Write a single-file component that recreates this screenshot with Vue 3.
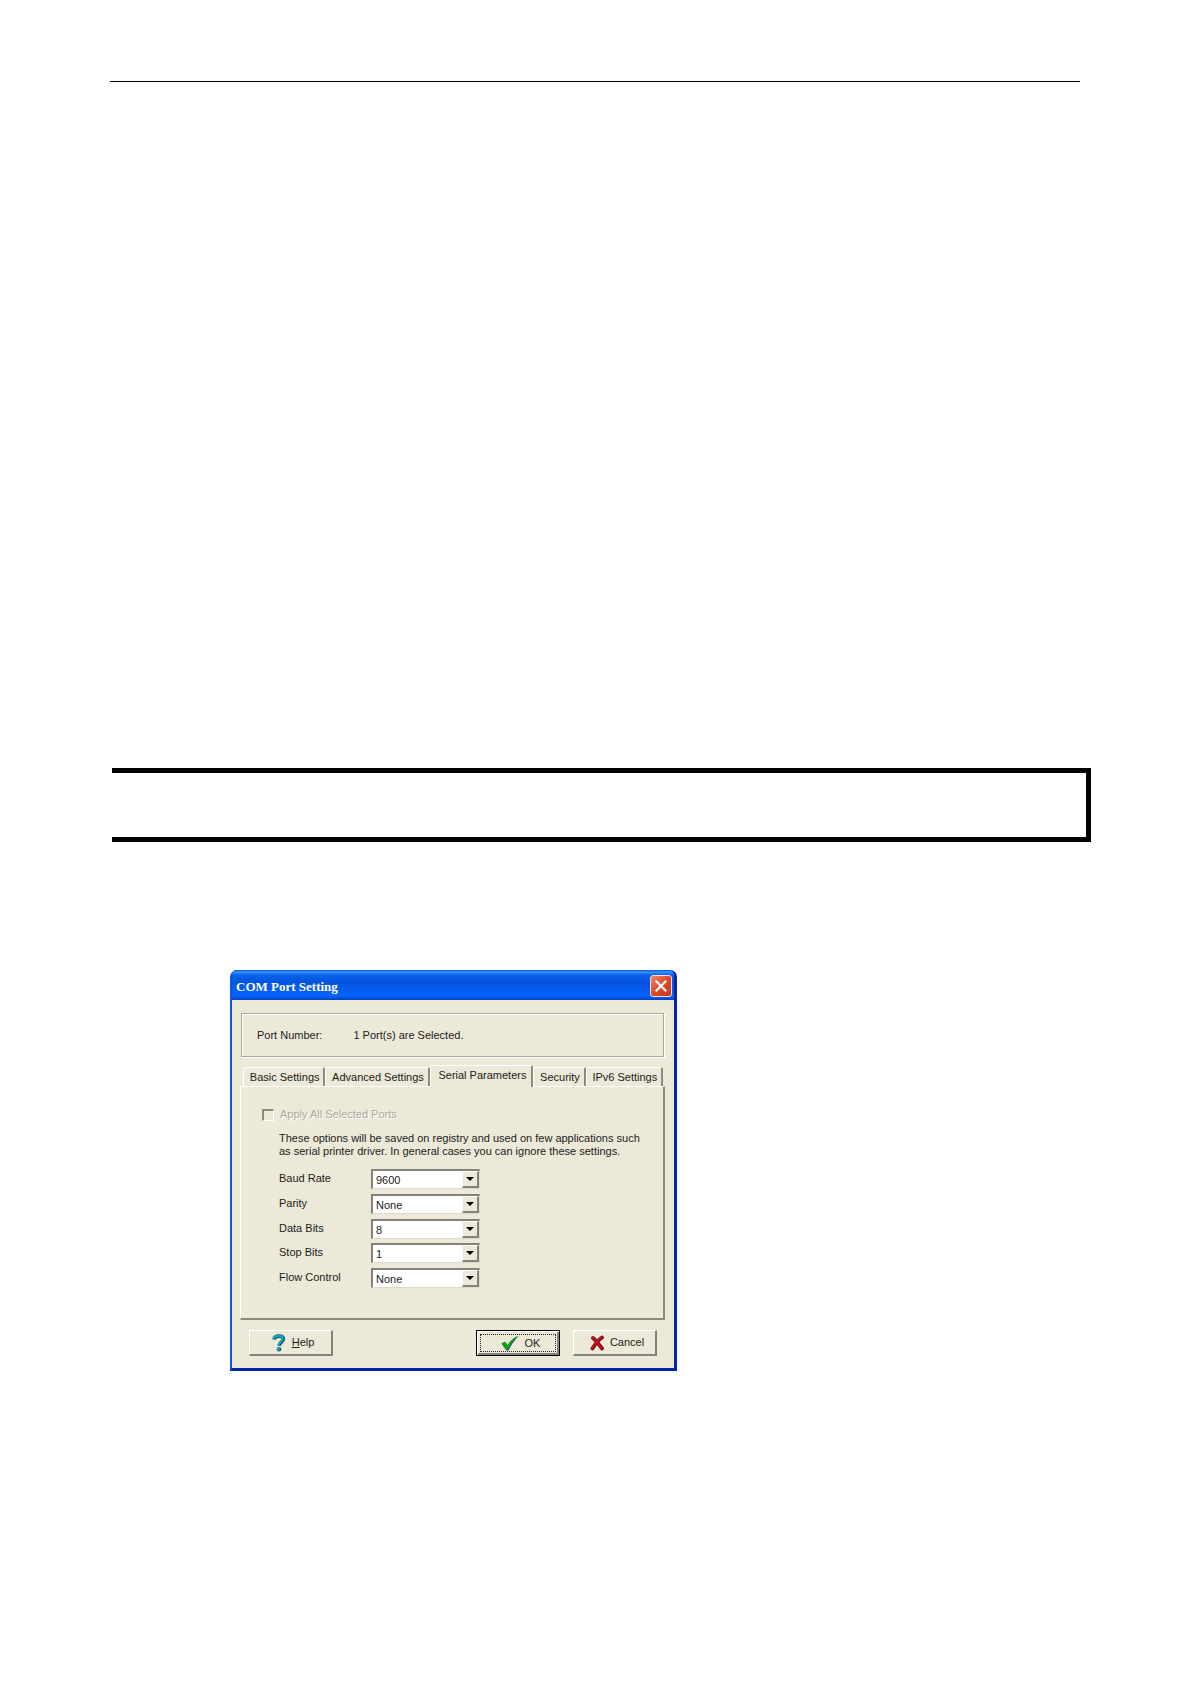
<template>
  <main class="page">
    <hr class="rule" />
    <div class="note-box"></div>

    <section class="dialog" role="dialog" aria-labelledby="dialog-title">
      <header class="title-bar">
        <h1 id="dialog-title" class="title">COM Port Setting</h1>
        <button type="button" class="close" aria-label="Close">
          <svg viewBox="0 0 20 20" width="18" height="18">
            <path d="M5 5L15 15M15 5L5 15" stroke="#fff" stroke-width="2.4" stroke-linecap="square" />
          </svg>
        </button>
      </header>

      <div class="body">
        <div class="summary">
          <span>Port Number:</span>
          <span>1 Port(s) are Selected.</span>
        </div>

        <div class="tabs" role="tablist">
          <button
            v-for="tab in tabs"
            :key="tab"
            type="button"
            role="tab"
            class="tab"
            :class="{ active: tab === activeTab }"
            :aria-selected="tab === activeTab"
            @click="activeTab = tab"
          >
            {{ tab }}
          </button>
        </div>

        <div class="panel" role="tabpanel">
          <label class="apply">
            <input type="checkbox" class="checkbox" disabled />
            <span>Apply All Selected Ports</span>
          </label>
          <p class="hint">
            These options will be saved on registry and used on few applications such<br />
            as serial printer driver. In general cases you can ignore these settings.
          </p>
          <div class="fields">
            <div v-for="field in fields" :key="field.id" class="field">
              <label :for="field.id" class="field-label">{{ field.label }}</label>
              <div class="combo">
                <select :id="field.id" v-model="field.value" class="select">
                  <option v-for="option in field.options" :key="option">{{ option }}</option>
                </select>
                <span class="arrow"></span>
              </div>
            </div>
          </div>
        </div>

        <footer class="actions">
          <button type="button" class="btn help">
            <svg viewBox="0 0 14 18" width="14" height="18">
              <path d="M2 5.500C2.500 2.800 4.500 2.200 7 2.200C9.800 2.200 11.300 3.400 11.300 5.200C11.300 7.800 7.500 8 7.300 11.800" fill="none" stroke="#12617e" stroke-width="3.800" />
              <path d="M1.500 5C2 2.500 4.500 1.800 7 1.800C9.300 1.800 10.700 2.900 10.700 4.800C10.700 7.300 6.800 7.600 6.600 11" fill="none" stroke="#16a9b5" stroke-width="2" />
              <circle cx="7" cy="15.300" r="2.300" fill="#12617e" />
              <circle cx="6.500" cy="14.900" r="1.500" fill="#16a9b5" />
            </svg>
            <span><u>H</u>elp</span>
          </button>
          <button type="button" class="btn ok">
            <svg viewBox="0 0 18 16" width="18" height="16">
              <path d="M1 9L4.500 7.500L7 10.500C9.500 6.500 13 3 17.800 1C13.500 5 10.500 9.500 7.500 15.500H5.500Z" fill="#23518a" />
              <path d="M0.300 8.500L4 6.600L6.500 9.900C9 6 12.500 2.500 17.300 0.500C13 4.500 9.500 9 6.800 14.800H5Z" fill="#12a012" />
            </svg>
            <span>OK</span>
          </button>
          <button type="button" class="btn">
            <svg viewBox="0 0 14 16" width="14" height="16">
              <path d="M3 3C5.500 5 9 9.500 12 13.500M12 2.500C8.500 5 5 9.500 2.500 13.500" fill="none" stroke="#7a0c14" stroke-width="3.800" stroke-linecap="round" />
              <path d="M2.500 2.700C5 5 8.500 9.500 11.500 13M11.500 2.500C8 5 4.500 9.500 2.200 13" fill="none" stroke="#bd141c" stroke-width="2.200" stroke-linecap="round" />
            </svg>
            <span>Cancel</span>
          </button>
        </footer>
      </div>
    </section>
  </main>
</template>

<script setup>
import { reactive, ref } from 'vue'

const tabs = ['Basic Settings', 'Advanced Settings', 'Serial Parameters', 'Security', 'IPv6 Settings']
const activeTab = ref('Serial Parameters')

const fields = reactive([
  { id: 'baud-rate', label: 'Baud Rate', value: '9600', options: ['9600'] },
  { id: 'parity', label: 'Parity', value: 'None', options: ['None'] },
  { id: 'data-bits', label: 'Data Bits', value: '8', options: ['8'] },
  { id: 'stop-bits', label: 'Stop Bits', value: '1', options: ['1'] },
  { id: 'flow-control', label: 'Flow Control', value: 'None', options: ['None'] },
])
</script>

<style>
body {
  margin: 0;
  background: #fff;
}
</style>

<style scoped>
* {
  box-sizing: border-box;
}

.page {
  min-height: 100vh;
  padding: 81px 100px 0 110px;
  font-family: "Liberation Sans", Arial, sans-serif;
  font-size: 11px;
  line-height: 13px;
  color: #1c1c18;
}

.rule {
  height: 1px;
  margin: 0 11px 0 0;
  border: 0;
  background: #000;
}

.note-box {
  height: 74px;
  margin: 686px 0 128px 2px;
  border: 5px solid #000;
  border-left: 0;
}

.dialog {
  width: 447px;
  max-width: 100%;
  margin-left: 120px;
  border: solid;
  border-width: 0 3px 3px 2px;
  border-color: #0831d9 #0425a5 #0425a5 #0c59e4;
  border-radius: 7px 7px 0 0;
  background: #0452e0;
}

.title-bar {
  display: flex;
  align-items: center;
  justify-content: space-between;
  height: 30px;
  padding: 2px 2px 0 4px;
  border-radius: 5px 5px 0 0;
  background: linear-gradient(#0a57d0 0, #3593ff 2px, #0a62ea 5px, #0453de 12px, #0560f5 22px, #0566fb 26px, #0340c0 30px);
}

.title {
  margin: 0;
  padding-top: 1px;
  font-family: "Liberation Serif", "Times New Roman", serif;
  font-size: 13px;
  line-height: 16px;
  color: #fff;
}

.close {
  display: flex;
  align-items: center;
  justify-content: center;
  width: 22px;
  height: 22px;
  padding: 0;
  border: 1px solid #f3dcd8;
  border-radius: 3px;
  background: linear-gradient(135deg, #ee8a6c, #dc4a26 50%, #c23a18);
}

.body {
  padding: 13px 9px 12px 8px;
  background: #ece9d8;
}

.summary {
  display: flex;
  align-items: center;
  gap: 31px;
  height: 44px;
  margin: 0 1px 0 1px;
  padding-left: 15px;
  border: 1px solid #aca899;
  box-shadow: inset 1px 1px #fff, 1px 1px #fff;
}

.tabs {
  display: flex;
  align-items: flex-end;
  height: 21px;
  margin: 8px 2px 0 3px;
}

.tab {
  flex: 1 1 auto;
  height: 19px;
  padding: 0 1px 0 3px;
  border: solid;
  border-width: 1px 2px 0 1px;
  border-color: #fff #8d8a7c transparent #fff;
  border-radius: 2px 2px 0 0;
  background: #ece9d8;
  font: inherit;
  color: inherit;
  white-space: nowrap;
}

.tab.active {
  height: 22px;
  margin-bottom: -1px;
  padding: 0 2px 3px 5px;
  z-index: 1;
}

.panel {
  height: 234px;
  padding: 21px 18px 0 21px;
  border: solid;
  border-width: 1px 2px 2px 1px;
  border-color: #fff #8d8a7c #8d8a7c #fff;
}

.apply {
  display: flex;
  align-items: center;
  gap: 6px;
  color: #aca899;
  text-shadow: 1px 1px #fff;
}

.checkbox {
  appearance: none;
  width: 12px;
  height: 12px;
  margin: 0;
  border: solid;
  border-width: 2px 1px 1px 2px;
  border-color: #8d8a7c #fff #fff #8d8a7c;
}

.hint {
  margin: 11px 0 11px 17px;
  white-space: nowrap;
}

.fields {
  display: flex;
  flex-direction: column;
  justify-content: space-between;
  height: 119px;
  margin-left: 17px;
}

.field {
  display: flex;
}

.field-label {
  width: 92px;
  padding-top: 3px;
}

.combo {
  position: relative;
  width: 109px;
  height: 20px;
}

.select {
  appearance: none;
  width: 100%;
  height: 100%;
  padding: 2px 20px 0 3px;
  border: solid;
  border-width: 2px 1px 1px 2px;
  border-color: #85827a #dedac8 #dedac8 #85827a;
  border-radius: 0;
  background: #fff;
  font: inherit;
  color: inherit;
}

/* drop-down button drawn over the right end of the select */
.arrow {
  position: absolute;
  top: 2px;
  right: 1px;
  display: flex;
  align-items: center;
  justify-content: center;
  width: 17px;
  height: 17px;
  border: solid;
  border-width: 1px 2px 2px 1px;
  border-color: #fff #85827a #85827a #fff;
  background: #ece9d8;
  pointer-events: none;
}

.arrow::before {
  content: "";
  border: solid transparent;
  border-width: 4px 4px 0;
  border-top-color: #000;
}

.actions {
  display: flex;
  gap: 13px;
  margin: 10px 8px 0 9px;
}

.btn {
  display: flex;
  align-items: center;
  justify-content: center;
  gap: 6px;
  width: 84px;
  height: 26px;
  padding: 0 0 0 5px;
  border: solid;
  border-width: 1px 2px 2px 1px;
  border-color: #fff #85827a #85827a #fff;
  background: #ece9d8;
  font: inherit;
  color: inherit;
}

.help {
  margin-right: auto;
}

.ok {
  border: 1px solid #000;
  box-shadow: inset 1px 1px #fff, inset -2px -2px #85827a;
  outline: 1px dotted #222;
  outline-offset: -5px;
}
</style>
